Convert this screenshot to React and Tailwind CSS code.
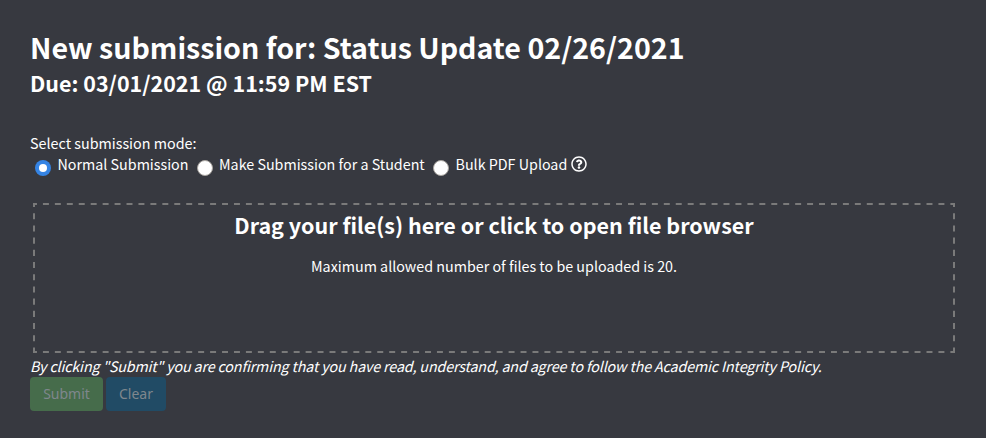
import React from 'react';

function Dashes() {
  return (
    <svg className="pointer-events-none absolute inset-0 h-full w-full" fill="none" stroke="#7a7a7a" strokeWidth="2">
      <path d="M0 1H922" strokeDasharray="5.97 5.97" strokeDashoffset="2" />
      <path d="M0 149H922" strokeDasharray="5.97 5.97" strokeDashoffset="2" />
      <path d="M1 0V150" strokeDasharray="6.1 6.1" strokeDashoffset="2" />
      <path d="M921 0V150" strokeDasharray="6.1 6.1" strokeDashoffset="2" />
    </svg>
  );
}

function Radio({ checked }) {
  return checked ? (
    <span className="mt-[8px] flex size-4 shrink-0 items-center justify-center rounded-full bg-[#3584e4]">
      <span className="size-2 rounded-full bg-white" />
    </span>
  ) : (
    <span className="mt-[8px] size-4 shrink-0 rounded-full border border-[#a9a5a0] bg-white" />
  );
}

export default function App() {
  return (
    <main className="h-[438px] w-[986px] overflow-hidden bg-[#373940] px-[30px] pt-[26px] font-['Noto_Sans_CJK_SC',sans-serif] text-white">
      <h1 className="text-[28.6px] leading-[42px] font-bold whitespace-nowrap">New submission for: Status Update 02/26/2021</h1>
      <h2 className="text-[21.46px] leading-[30px] font-bold whitespace-nowrap">Due: 03/01/2021 @ 11:59 PM EST</h2>
      <p className="mt-[34px] text-[14.33px] leading-[21px] whitespace-nowrap">Select submission mode:</p>
      <div className="flex h-[22px] pl-[5px] text-[14.3px] leading-[21px] whitespace-nowrap">
        <label className="flex h-[22px] w-[162px] items-center gap-[6.5px]"><Radio checked /><span className="-mt-[1px]">Normal Submission</span></label>
        <label className="flex h-[22px] w-[236px] items-center gap-[6px]"><Radio /><span className="-mt-[1px]">Make Submission for a Student</span></label>
        <label className="flex h-[22px] items-center gap-[6.5px]"><Radio /><span className="-mt-[1px]">Bulk PDF Upload</span></label>
        <svg className="mt-[2.5px] ml-[3.5px] size-4" viewBox="0 0 512 512" fill="white">
          <path d="M256 8C119 8 8 119 8 256s111 248 248 248 248-111 248-248S393 8 256 8zm0 448c-111 0-200-89-200-200 0-110 89-200 200-200 110 0 200 89 200 200 0 111-89 200-200 200zm107-255c0 67-73 68-73 93v6c0 7-5 12-12 12h-45c-7 0-12-5-12-12v-9c0-35 27-49 47-61 18-10 28-16 28-29 0-17-21-28-39-28-22 0-33 10-47 28-4 5-12 6-17 2l-28-21c-5-4-6-11-3-16 24-34 54-54 99-54 49 0 102 38 102 89zM298 368c0 23-19 42-42 42s-42-19-42-42 19-42 42-42 42 19 42 42z" />
        </svg>
      </div>
      <section className="relative mt-[28px] ml-[3px] flex h-[150px] w-[922px] flex-col items-center whitespace-nowrap">
        <Dashes />
        <h2 className="mt-[7px] text-[21.5px] leading-[30px] font-bold">Drag your file(s) here or click to open file browser</h2>
        <p className="mt-[15px] text-[14.3px] leading-[21px]">Maximum allowed number of files to be uploaded is 20.</p>
      </section>
      <p className="mt-[2px] text-[14.3px] leading-[21px] tracking-[-0.15px] whitespace-nowrap italic">By clicking "Submit" you are confirming that you have read, understand, and agree to follow the Academic Integrity Policy.</p>
      <div className="mt-[1px] flex gap-[3px] font-['Noto_Sans',sans-serif] text-[14px] text-[#7f878d]">
        <button className="h-[34px] w-[73px] rounded-[4px] bg-[#466c4b] pb-[2px]">Submit</button>
        <button className="h-[34px] w-[60px] rounded-[4px] bg-[#214b65] pb-[2px]">Clear</button>
      </div>
    </main>
  );
}
